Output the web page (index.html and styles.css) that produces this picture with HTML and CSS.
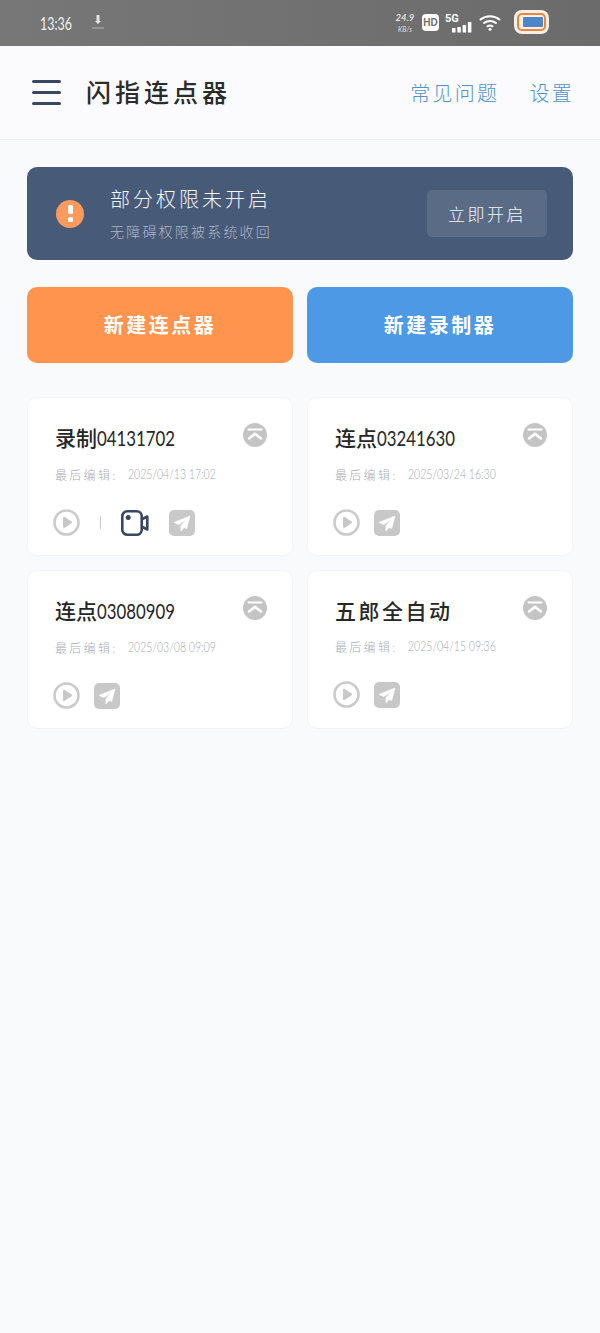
FILE: index.html
```html
<!DOCTYPE html>
<html lang="zh-CN">
<head>
<meta charset="utf-8">
<title>闪指连点器</title>
<link rel="stylesheet" href="styles.css">
</head>
<body>
<svg class="defs" width="0" height="0" aria-hidden="true">
  <symbol id="pin" viewBox="0 0 24 24">
    <circle cx="12" cy="12" r="12" fill="#c4c4c4"/>
    <path d="M5.500 6.500h13" stroke="#fff" stroke-width="2.200" stroke-linecap="round"/>
    <path d="M6 15.500l6-4.600 6 4.600" fill="none" stroke="#fff" stroke-width="2.600" stroke-linecap="round" stroke-linejoin="round"/>
  </symbol>
  <symbol id="play" viewBox="0 0 27 27">
    <circle cx="13.500" cy="13.500" r="12" fill="none" stroke="#cbcbcb" stroke-width="2.600"/>
    <path d="M10 8.600c0-.8.800-1.200 1.400-.8l7.200 4.800c.6.400.6 1.200 0 1.600l-7.200 4.800c-.6.400-1.400 0-1.400-.8z" fill="#c8c8c8"/>
  </symbol>
  <symbol id="send" viewBox="0 0 26 26">
    <rect width="26" height="26" rx="5" fill="#c8c8c8"/>
    <path d="M21 6L5 12.400l4.800 2.200 7.600-5-5.600 6.400.2 5 3-3.600 2.700 1.200z" fill="#fff" stroke="#fff" stroke-width=".6" stroke-linejoin="round"/>
  </symbol>
  <symbol id="cam" viewBox="0 0 28 26">
    <rect x="1.300" y="1.300" width="19.400" height="23.400" rx="5" fill="none" stroke="#3a4763" stroke-width="2.600"/>
    <circle cx="7.200" cy="7.600" r="2.500" fill="#3a4763"/>
    <path d="M20.500 9.500l5.800-3v13l-5.800-3" fill="none" stroke="#3a4763" stroke-width="2.600" stroke-linejoin="round"/>
  </symbol>
</svg>

<div class="statusbar">
  <div class="status-left">
    <span class="clock">13:36</span>
    <svg class="dl" width="14" height="16" viewBox="0 0 14 16"><path d="M5.500 1h3v6l1.500 0-3 3-3-3 1.500 0z" fill="#e4e4e4"/><path d="M1 14h12" stroke="#aaa" stroke-width="1.200"/></svg>
  </div>
  <div class="status-right">
    <div class="speed"><span class="speed-num">24.9</span><span class="speed-unit">KB/s</span></div>
    <span class="hd">HD</span>
    <div class="signal">
      <span class="five-g">5G</span>
      <svg width="20" height="11" viewBox="0 0 20 11"><rect x="0" y="6" width="3.500" height="4.500" fill="#fff"/><rect x="5.300" y="5" width="3.500" height="5.500" fill="#fff"/><rect x="10.600" y="3" width="3.500" height="7.500" fill="#fff"/><rect x="15.900" y="0" width="3.500" height="10.500" fill="#fff"/></svg>
    </div>
    <svg class="wifi" width="22" height="17" viewBox="0 0 22 17"><g fill="none" stroke="#fff" stroke-linecap="round"><path d="M1.500 5.500C7 1 15 1 20.500 5.500" stroke-width="2"/><path d="M5 9c3.500-2.800 8.500-2.800 12 0" stroke-width="2"/><path d="M8.500 12.300c1.500-1 3.500-1 5 0" stroke-width="2"/></g><circle cx="11" cy="15.300" r="1.500" fill="#fff"/></svg>
    <div class="battery"><div class="battery-ring"><div class="battery-fill"></div></div></div>
  </div>
</div>

<header class="topbar">
  <div class="brand">
    <div class="menu"><i></i><i></i><i></i></div>
    <h1 class="app-title">闪指连点器</h1>
  </div>
  <nav class="top-links">
    <a class="top-link">常见问题</a>
    <a class="top-link">设置</a>
  </nav>
</header>

<main class="content">
  <section class="banner">
    <div class="banner-main">
      <span class="alert-dot"><i class="alert-bar"></i><i class="alert-point"></i></span>
      <div class="banner-text">
        <div class="banner-title">部分权限未开启</div>
        <div class="banner-sub">无障碍权限被系统收回</div>
      </div>
    </div>
    <button class="banner-btn">立即开启</button>
  </section>

  <section class="cta-row">
    <button class="cta cta-orange">新建连点器</button>
    <button class="cta cta-blue">新建录制器</button>
  </section>

  <section class="cards">
    <article class="card">
      <svg class="pin"><use href="#pin"/></svg>
      <div class="card-title">录制<span class="num">04131702</span></div>
      <div class="card-meta"><span class="meta-label">最后编辑:</span><span class="meta-date">2025/04/13 17:02</span></div>
      <div class="actions actions-wide">
        <svg class="ico"><use href="#play"/></svg>
        <i class="divider"></i>
        <svg class="ico ico-cam"><use href="#cam"/></svg>
        <svg class="ico ico-send"><use href="#send"/></svg>
      </div>
    </article>
    <article class="card">
      <svg class="pin"><use href="#pin"/></svg>
      <div class="card-title">连点<span class="num">03241630</span></div>
      <div class="card-meta"><span class="meta-label">最后编辑:</span><span class="meta-date">2025/03/24 16:30</span></div>
      <div class="actions">
        <svg class="ico"><use href="#play"/></svg>
        <svg class="ico ico-send"><use href="#send"/></svg>
      </div>
    </article>
    <article class="card">
      <svg class="pin"><use href="#pin"/></svg>
      <div class="card-title">连点<span class="num">03080909</span></div>
      <div class="card-meta"><span class="meta-label">最后编辑:</span><span class="meta-date">2025/03/08 09:09</span></div>
      <div class="actions">
        <svg class="ico"><use href="#play"/></svg>
        <svg class="ico ico-send"><use href="#send"/></svg>
      </div>
    </article>
    <article class="card">
      <svg class="pin"><use href="#pin"/></svg>
      <div class="card-title card-title-wide">五郎全自动</div>
      <div class="card-meta"><span class="meta-label">最后编辑:</span><span class="meta-date">2025/04/15 09:36</span></div>
      <div class="actions">
        <svg class="ico"><use href="#play"/></svg>
        <svg class="ico ico-send"><use href="#send"/></svg>
      </div>
    </article>
  </section>
</main>
</body>
</html>
```
FILE: styles.css
```css
* { box-sizing: border-box; }
html, body { margin: 0; padding: 0; }
body {
  width: 600px;
  height: 1333px;
  overflow: hidden;
  background: #f9fafc;
  font-family: "Noto Sans CJK SC", "Noto Sans", sans-serif;
  color: #222;
}
.defs { display: block; height: 0; }

.statusbar {
  height: 46px;
  background: linear-gradient(90deg, #777777, #6b6b6b);
  display: flex;
  justify-content: space-between;
  align-items: center;
  padding: 0 51px 0 40px;
  color: #fff;
}
.status-left { display: flex; align-items: center; gap: 20px; }
.clock { display: block; width: 31px; margin-top: -1px; white-space: nowrap; font-family: Lato, sans-serif; font-size: 18px; font-weight: 400; color: #f2f2f2; transform: scaleX(0.69); transform-origin: left center; }
.dl { margin-top: -3px; }
.status-right { display: flex; align-items: center; }
.speed { display: flex; flex-direction: column; align-items: center; width: 20px; margin-right: 7px; font-family: Lato, sans-serif; font-style: italic; line-height: 1; }
.speed-num { font-size: 9.500px; margin-bottom: 4px; }
.speed-unit { font-size: 7px; color: #ddd; }
.hd { width: 17px; height: 17px; background: #fff; border-radius: 4px; color: #6f6f6f; font: 700 10px/17px "Liberation Sans", sans-serif; text-align: center; margin-right: 6px; margin-top: -1px; }
.signal { position: relative; width: 27px; height: 20px; margin-right: 7px; display: flex; align-items: flex-end; justify-content: flex-end; }
.five-g { position: absolute; left: 0; top: 0; font: 700 11px/12px Roboto, sans-serif; }
.wifi { margin-right: 13px; margin-top: -2px; }
.battery { width: 35px; height: 24px; background: #f7efe6; border-radius: 8px; display: flex; align-items: center; justify-content: center; margin-top: -2px; }
.battery-ring { width: 29px; height: 18px; border: 2px solid #e8873c; border-radius: 5px; padding: 2px; }
.battery-fill { width: 20px; height: 10px; margin-left: 2px; background: #4d86c9; border-radius: 1px; }

.topbar {
  height: 94px;
  background: #fbfbfe;
  border-bottom: 1px solid #f0f1f4;
  display: flex;
  justify-content: space-between;
  align-items: center;
  padding: 0 26px 0 32px;
}
.brand { display: flex; align-items: center; gap: 25px; }
.menu { width: 29px; height: 25px; display: flex; flex-direction: column; justify-content: space-between; }
.menu i { display: block; height: 3px; background: #3a4763; border-radius: 2px; }
.app-title { margin: -3px 0 0; font-size: 25px; font-weight: 500; letter-spacing: 4px; line-height: 34px; color: #2b2b2b; }
.top-links { display: flex; gap: 30px; }
.top-link { font-size: 20px; font-weight: 300; letter-spacing: 2.300px; line-height: 30px; color: #4f93cb; }

.content { padding: 27px 27px 0; display: flex; flex-direction: column; }

.banner {
  height: 93px;
  background: #475a78;
  border-radius: 10px;
  display: flex;
  justify-content: space-between;
  align-items: center;
  padding: 0 26px 0 29px;
  margin-bottom: 27px;
}
.banner-main { display: flex; align-items: center; gap: 26px; }
.alert-dot { width: 28px; height: 28px; border-radius: 50%; background: #fb9a5c; display: flex; flex-direction: column; align-items: center; justify-content: center; gap: 3px; }
.alert-bar { width: 5px; height: 9px; background: #fff; border-radius: 1.500px; }
.alert-point { width: 5px; height: 5px; background: #fff; border-radius: 1.500px; }
.banner-text { display: flex; flex-direction: column; gap: 8px; margin-top: -1px; }
.banner-title { font-size: 20px; font-weight: 300; letter-spacing: 3px; line-height: 28px; color: #f3f5f8; }
.banner-sub { font-size: 14px; font-weight: 300; letter-spacing: 2.200px; line-height: 20px; color: #aeb8c8; }
.banner-btn {
  width: 120px; height: 47px;
  background: #5a6b85;
  border: 0;
  border-radius: 5px;
  color: #f5f6f8;
  font: 300 17px/24px "Noto Sans CJK SC", sans-serif;
  letter-spacing: 2.500px;
  padding: 0;
}

.cta-row { display: grid; grid-template-columns: 1fr 1fr; gap: 14px; margin-bottom: 34px; }
.cta { height: 76px; border: 0; border-radius: 10px; color: #fff; font: 700 20px/28px "Noto Sans CJK SC", sans-serif; letter-spacing: 2.500px; padding: 0; }
.cta-orange { background: #ff944f; }
.cta-blue { background: #4d99e6; }

.cards { display: grid; grid-template-columns: 1fr 1fr; gap: 14px; }
.card {
  position: relative;
  height: 159px;
  background: #fff;
  border: 1px solid #f2f3f6;
  border-radius: 10px;
  padding: 23px 0 0 27px;
}
.pin { position: absolute; top: 25px; right: 25px; width: 24px; height: 24px; }
.card-title { font-size: 21px; font-weight: 500; line-height: 32px; color: #262626; white-space: nowrap; }
.num { display: inline-block; font-family: Lato, sans-serif; font-weight: 400; transform: scaleX(0.8); transform-origin: left center; }
.card-title-wide { letter-spacing: 2.500px; }
.card-meta { display: flex; align-items: center; gap: 10px; margin-top: 10px; height: 20px; color: #a6aebb; white-space: nowrap; }
.meta-label { font-size: 12px; font-weight: 300; letter-spacing: 2.300px; }
.meta-date { display: block; font-family: Lato, sans-serif; font-size: 13px; font-weight: 300; color: #a4a8af; transform: scaleX(0.81); transform-origin: left center; }
.actions { display: flex; align-items: center; gap: 14px; margin: 25px 0 0 -2px; }
.actions-wide { gap: 20px; }
.ico { width: 27px; height: 27px; flex: none; }
.ico-cam { width: 28px; height: 26px; }
.ico-send { width: 26px; height: 26px; }
.divider { display: block; width: 1px; height: 13px; background: #c8c8c8; }
```
